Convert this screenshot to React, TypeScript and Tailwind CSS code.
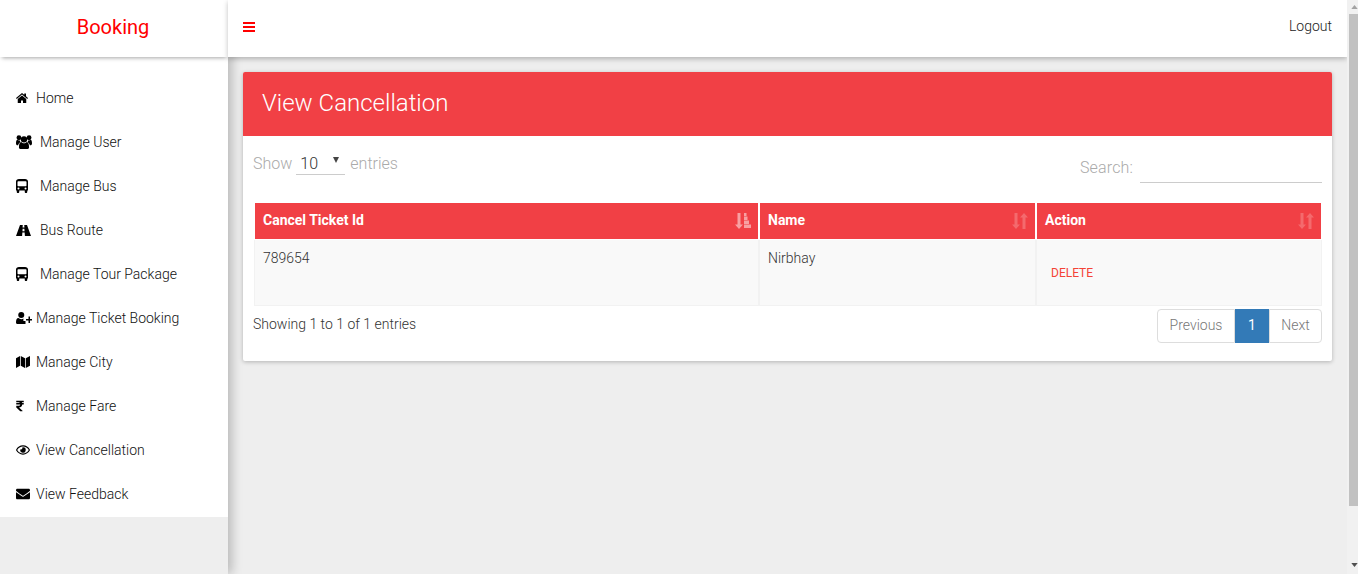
import React from "react";
import { FaRupeeSign, FaRegEye, FaEnvelope } from "react-icons/fa";

const Home = () => (
  <svg viewBox="0 0 24 20" className="h-[10px] w-[12px]" fill="#000">
    <path d="M12 0 0 10l1.500 1.800L12 3l10.500 8.800L24 10l-4-3.400V1h-3.500v2.700z" />
    <path d="M12 5 3.500 12v8H10v-5h4v5h6.500v-8z" />
  </svg>
);
const Users = () => (
  <svg viewBox="0 0 30 26" className="h-[14px] w-[16px]" fill="#000">
    <circle cx="15" cy="8" r="6" />
    <circle cx="5.500" cy="5" r="4.500" />
    <circle cx="24.500" cy="5" r="4.500" />
    <path d="M8 26c-1.500 0-2.500-1-2.500-2.500C5.500 17 7 13 10 13c1 1.200 3 2.500 5 2.500s4-1.300 5-2.500c3 0 4.500 4 4.500 10.500 0 1.500-1 2.500-2.500 2.500z" />
    <path d="M0 15c0-3.500 1-6 2.500-6 1 .8 2.200 1.400 3.500 1.400.5 0 1 0 1.500-.2-.2 1.200.3 2.300 1 3.300C6 14.500 4.500 16.500 4 19H2c-1.200 0-2-1.500-2-4zM30 15c0-3.500-1-6-2.500-6-1 .8-2.200 1.400-3.500 1.400-.5 0-1 0-1.500-.2.2 1.200-.3 2.300-1 3.300 2.500 1 4 3 4.500 5.500h2c1.200 0 2-1.500 2-4z" />
  </svg>
);
const Bus = () => (
  <svg viewBox="0 0 24 28" className="h-[14px] w-[12px]" fill="#000">
    <path
      fillRule="evenodd"
      d="M6 0h12c3.500 0 6 2 6 5v18h-1.500v3c0 1-.8 2-2 2h-1c-1.200 0-2-1-2-2v-3H6.500v3c0 1-.8 2-2 2h-1c-1.200 0-2-1-2-2v-3H0V5c0-3 2.500-5 6-5zM4.500 4.500C3.500 4.500 3 5 3 6v7c0 1 .5 1.500 1.500 1.500h15c1 0 1.500-.5 1.500-1.500V6c0-1-.5-1.500-1.500-1.500zM5 17a2 2 0 1 0 0 4 2 2 0 0 0 0-4zM19 17a2 2 0 1 0 0 4 2 2 0 0 0 0-4z"
    />
  </svg>
);
const Road = () => (
  <svg viewBox="0 0 30 22" className="h-[11px] w-[15px]" fill="#000">
    <path d="M8 0h5.500l-.4 5h3.800l-.4-5H22l8 22H17.800l-.5-7h-4.600l-.5 7H0zM13.200 7.500l-.3 5h4.200l-.3-5z" fillRule="evenodd" />
  </svg>
);
const UserPlus = () => (
  <svg viewBox="0 0 32 24" className="h-[12px] w-[16px]" fill="#000">
    <circle cx="10.500" cy="6" r="6" />
    <path d="M3 24c-2 0-3-1.200-3-3 0-5 1.300-9 5-9 1.500 1.500 3.200 2.300 5.500 2.300 1.600 0 3-.4 4.300-1.200V18H19v6z" />
    <path d="M25 9h3v5h4v3h-4v5h-3v-5h-5v-3h5z" />
  </svg>
);
const MapIcon = () => (
  <svg viewBox="0 0 28 24" className="h-[12px] w-[14px]" fill="#000">
    <path d="M0 4.500 8 0v19.500L0 24zM9.500 0l8.500 4.500V24l-8.500-4.500zM19.500 4.500 28 0v19.500L19.500 24z" />
  </svg>
);
const Rupee = () => <FaRupeeSign className="h-[12px] w-[8px]" color="#000" />;
const Eye = () => <FaRegEye className="h-[14px] w-[14px]" color="#000" />;
const Mail = () => <FaEnvelope className="h-[14px] w-[14px]" color="#000" />;

const Bars = () => (
  <svg viewBox="0 0 12 10" className="h-[10px] w-[12px]" fill="#ff0000">
    <rect width="12" height="2" />
    <rect y="4" width="12" height="2" />
    <rect y="8" width="12" height="2" />
  </svg>
);

const SortBoth = ({ active }: { active?: boolean }) => (
  <svg viewBox="0 0 16 16" className="h-[16px] w-[16px]" fill={active ? "rgba(255,255,255,0.5)" : "rgba(255,255,255,0.22)"}>
    {active ? (
      <>
        <path d="M2.500 0h3v11.500H8L4 16 0 11.500h2.500z" />
        <path d="M9 0h2.500v3H9zM9 3.500h3.500v3.500H9zM9 7.500h5V11H9zM9 11.500h7V15H9z" />
      </>
    ) : (
      <>
        <path d="M2.500 0h3v11.500H8L4 16 0 11.500h2.500z" />
        <path d="M10.500 16h3V4.500H16L12 0 8 4.500h2.500z" />
      </>
    )}
  </svg>
);

const items = [
  { label: "Home", icon: Home, gap: "w-[20px]" },
  { label: "Manage User", icon: Users, gap: "w-[24px]" },
  { label: "Manage Bus", icon: Bus, gap: "w-[24px]" },
  { label: "Bus Route", icon: Road, gap: "w-[24px]" },
  { label: "Manage Tour Package", icon: Bus, gap: "w-[24px]" },
  { label: "Manage Ticket Booking", icon: UserPlus, gap: "w-[20px]" },
  { label: "Manage City", icon: MapIcon, gap: "w-[20px]" },
  { label: "Manage Fare", icon: Rupee, gap: "w-[20px]" },
  { label: "View Cancellation", icon: Eye, gap: "w-[20px]" },
  { label: "View Feedback", icon: Mail, gap: "w-[20px]" },
];

export default function App() {
  return (
    <div className="flex h-[574px] w-[1358px] overflow-hidden bg-[#eeeeee] font-['Roboto',sans-serif] font-light text-[#333]">
      <aside className="z-10 flex w-[228px] shrink-0 flex-col bg-[#eeeeee] shadow-[4px_0_10px_rgba(0,0,0,0.22)]">
        <div className="relative z-10 flex h-[57px] items-center justify-center bg-white pb-[3px] pr-[2px] text-[20px] font-normal text-[#ff0000] shadow-[0_3px_4px_-2px_rgba(0,0,0,0.35)]">
          Booking
        </div>
        <nav className="flex h-[460px] flex-col bg-white pt-[19px]">
          {items.map((it) => {
            const Icon = it.icon;
            return (
              <div key={it.label} className="flex h-[44px] items-center pl-[16px] text-[14px] text-[#111]">
                <span className={`flex ${it.gap} shrink-0 items-center`}>
                  <Icon />
                </span>
                <span>{it.label}</span>
              </div>
            );
          })}
        </nav>
      </aside>
      <div className="flex min-w-0 flex-1 flex-col">
        <header className="relative z-20 flex h-[57px] shrink-0 items-center justify-between bg-white pl-[15px] pr-[15px] shadow-[0_2px_5px_rgba(0,0,0,0.25)]">
          <span className="mb-[3px]">
            <Bars />
          </span>
          <span className="mb-[5px] text-[14px] text-[#222]">Logout</span>
        </header>
        <main className="flex-1 px-[15px] pt-[15px]">
          <section className="rounded-[2px] bg-white shadow-[0_1px_4px_rgba(0,0,0,0.25)]">
            <div className="flex h-[64px] items-center rounded-t-[2px] bg-[#f14045] pb-[2px] pl-[19px] text-[24px] text-white">
              View Cancellation
            </div>
            <div className="flex h-[67px] justify-between px-[10px]">
              <div className="flex items-start pt-[16px] text-[16px] text-[#aaaaaa]">
                <span>Show</span>
                <span className="relative ml-[4px] mr-[5px] mt-[1px] flex h-[22px] w-[49px] border-b border-[#cccccc] pl-[4px] pt-[1px] leading-[20px] text-[#333]">
                  10
                  <svg viewBox="0 0 6 6" className="absolute left-[37px] top-[4px] h-[6px] w-[6px]" fill="#444">
                    <path d="M0 0h6L3 6z" />
                  </svg>
                </span>
                <span>entries</span>
              </div>
              <div className="flex items-start pt-[20px] text-[16px] text-[#aaaaaa]">
                <span className="tracking-[0.15px]">Search:</span>
                <span className="ml-[7px] mt-[-2px] block h-[29px] w-[182px] border-b border-[#cccccc]" />
              </div>
            </div>
            <div className="px-[11px]">
              <div className="grid grid-cols-[505px_277px_286px]">
                {[
                  { t: "Cancel Ticket Id", active: true },
                  { t: "Name", active: false },
                  { t: "Action", active: false },
                ].map((h) => (
                  <div key={h.t} className="flex h-[36px] items-center justify-between border-x border-white bg-[#f14045] pb-[2px] pl-[8px] pr-[7px] text-[14px] font-bold text-white">
                    <span>{h.t}</span>
                    <span className="mt-[2px]">
                      <SortBoth active={h.active} />
                    </span>
                  </div>
                ))}
                <div className="mt-[1px] h-[66px] border-x border-b border-[#f2f2f2] bg-[#f9f9f9] pl-[8px] pt-[8px] text-[14px] text-[#333]">789654</div>
                <div className="mt-[1px] h-[66px] border-x border-b border-[#f2f2f2] bg-[#f9f9f9] pl-[8px] pt-[8px] text-[14px] text-[#333]">Nirbhay</div>
                <div className="mt-[1px] flex h-[66px] items-center border-x border-b border-[#f2f2f2] bg-[#f9f9f9] pl-[14px] pt-[1px] text-[12px] font-normal text-[#f44336]">
                  DELETE
                </div>
              </div>
            </div>
            <div className="flex h-[55px] items-start justify-between px-[10px] pt-[3px]">
              <div className="pt-[5px] text-[14px] text-[#333]">Showing 1 to 1 of 1 entries</div>
              <div className="flex h-[34px] text-[14px]">
                <span className="flex w-[78px] items-center justify-center rounded-l-[4px] border border-[#dddddd] bg-white pb-[2px] text-[#777]">Previous</span>
                <span className="flex w-[34px] items-center justify-center bg-[#337ab7] pb-[2px] font-normal text-white">1</span>
                <span className="flex w-[53px] items-center justify-center rounded-r-[4px] border border-[#dddddd] bg-white pb-[2px] text-[#777]">Next</span>
              </div>
            </div>
          </section>
        </main>
      </div>
      <div className="relative z-30 flex w-[11px] shrink-0 flex-col bg-[#f1f1f1]">
        <div className="flex h-[14px] shrink-0 items-center justify-center pl-[3px]">
          <svg viewBox="0 0 8 5" className="h-[4px] w-[7px]" fill="#a3a3a3">
            <path d="M4 0l4 5H0z" />
          </svg>
        </div>
        <div className="ml-[2px] h-[492px] shrink-0 bg-[#c1c1c1]" />
        <div className="flex flex-1 items-end justify-center pb-[7px] pl-[3px]">
          <svg viewBox="0 0 8 5" className="h-[4px] w-[7px]" fill="#505050">
            <path d="M0 0h8L4 5z" />
          </svg>
        </div>
      </div>
    </div>
  );
}
